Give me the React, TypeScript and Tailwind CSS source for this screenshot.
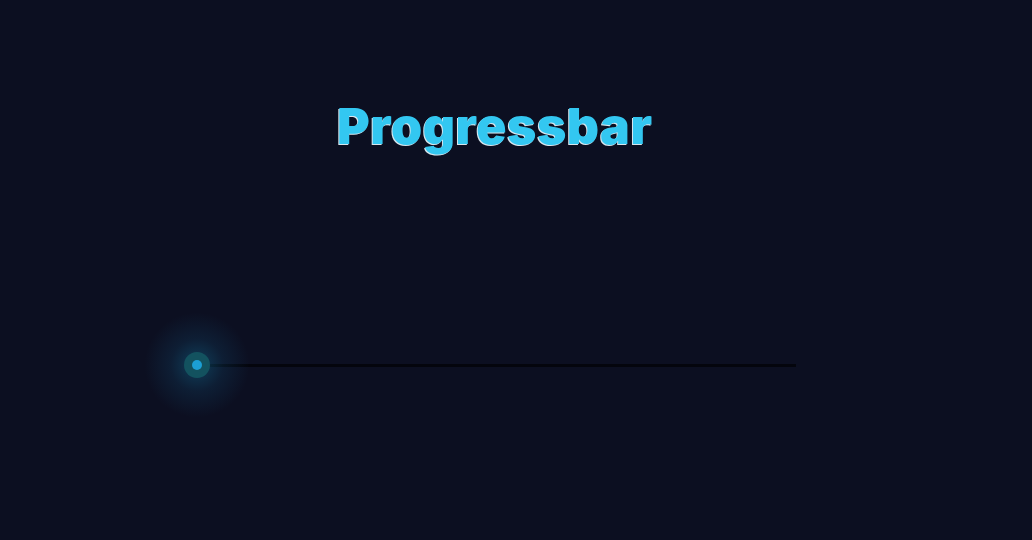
import React from 'react';

const App: React.FC = () => {
  return (
    <div className="w-[1032px] h-[540px] bg-[#0c0f21] flex flex-col overflow-hidden">
      {/* Title */}
      <div className="pt-[88px] pl-[337px]">
        <h1 className="font-['Inter',sans-serif] font-black text-[50px] leading-[76px] tracking-[0.5px] text-[#33c7f1] [text-shadow:-1px_1px_0_#d8e6ee]">
          Progressbar
        </h1>
      </div>

      {/* Progress bar */}
      <div className="mt-[188px] pl-[184px] flex items-center">
        <div className="relative w-[26px] h-[26px] flex items-center justify-center">
          <div className="absolute -inset-[40px] rounded-full bg-[radial-gradient(circle,rgba(20,120,160,0.45)_0%,rgba(20,90,130,0.2)_35%,rgba(12,15,33,0)_70%)]" />
          <div className="relative w-[26px] h-[26px] rounded-full bg-[#13525f] flex items-center justify-center">
            <div className="w-[10px] h-[10px] rounded-full bg-[#1c9fd4]" />
          </div>
        </div>
        <div className="w-[591px] h-[3px] bg-[#04050d] -ml-[5px]" />
      </div>
    </div>
  );
};

export default App;
